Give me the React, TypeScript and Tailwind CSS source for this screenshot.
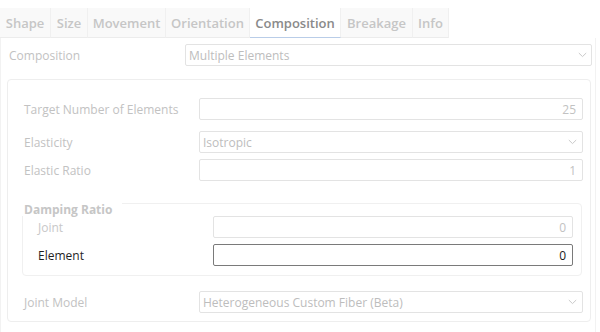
import React from "react";

const tabs = [
  { name: "Shape", w: 51 },
  { name: "Size", w: 37 },
  { name: "Movement", w: 78 },
  { name: "Orientation", w: 84 },
  { name: "Composition", w: 91, active: true },
  { name: "Breakage", w: 72 },
  { name: "Info", w: 36 },
];

function Chevron() {
  return (
    <svg width="9" height="6" viewBox="0 0 9 6" className="shrink-0">
      <path d="M0.8 1 L4.5 4.6 L8.2 1" fill="none" stroke="#c9c9c9" strokeWidth="1" />
    </svg>
  );
}

function Input({ value, dark, w }: { value: string; dark?: boolean; w: string }) {
  return (
    <div
      className={`h-[22px] ${w} rounded-[2px] border flex items-center justify-end px-[6px] pt-[1px] ${
        dark ? "border-[#7a7a7a] text-[#1a1a1a]" : "border-[#e3e3e3] text-[#c2c2c2]"
      }`}
    >
      {value}
    </div>
  );
}

function Select({ value, w, pr }: { value: string; w: string; pr: string }) {
  return (
    <div
      className={`h-[22px] ${w} rounded-[2px] border border-[#e3e3e3] flex items-center justify-between pl-[3px] ${pr} text-[#bdbdbd]`}
    >
      <span className="pt-[1px]">{value}</span>
      <Chevron />
    </div>
  );
}

export default function App() {
  return (
    <div
      className="w-[600px] h-[332px] bg-white overflow-hidden text-[12px] leading-none"
      style={{ fontFamily: '"Open Sans", "Noto Sans", sans-serif' }}
    >
      <div className="pt-[8px]">
        <div className="flex h-[30px]">
          {tabs.map((t) => (
            <div
              key={t.name}
              style={{ width: t.w }}
              className={`flex items-center justify-center font-semibold text-[13px] pt-[1px] border-r border-[#f0f0f0] ${
                t.active
                  ? "bg-white text-[#8a8a8a] border-b border-b-[#b9cde8]"
                  : "bg-[#f9f9f9] text-[#c6c6c6] border-b border-b-[#ececec]"
              }`}
            >
              {t.name}
            </div>
          ))}
        </div>
        <div className="h-[294px] w-[596px] border-l border-r border-[#f2f2f2] pt-[6px]">
          <div className="flex items-center h-[22px]">
            <div className="w-[184px] pl-[8px] pt-[1px] text-[#c2c2c2]">Composition</div>
            <Select value="Multiple Elements" w="w-[407px]" pr="pr-[4px]" />
          </div>
          <div className="mt-[13px] ml-[6px] w-[584px] h-[243px] rounded-[4px] border border-[#eeeeee] pt-[18px] pl-[16px]">
            <div className="flex items-center">
              <div className="w-[175px] pt-[1px] text-[#c2c2c2]">Target Number of Elements</div>
              <Input value="25" w="w-[384px]" />
            </div>
            <div className="flex items-center mt-[11px]">
              <div className="w-[175px] pt-[1px] text-[#c2c2c2]">Elasticity</div>
              <Select value="Isotropic" w="w-[384px]" pr="pr-[5px]" />
            </div>
            <div className="flex items-center mt-[6px]">
              <div className="w-[175px] pt-[1px] text-[#c2c2c2]">Elastic Ratio</div>
              <Input value="1" w="w-[384px]" />
            </div>
            <div className="relative mt-[22px] ml-[-2px] w-[560px] h-[73px] rounded-[4px] border border-[#f0f0f0] pt-[12px] pl-[15px]">
              <div className="absolute left-[-1px] top-[-1px] w-[100px] h-[13px] bg-white pl-[2px] pt-[1px] font-bold text-[#c6c6c6]">
                Damping Ratio
              </div>
              <div className="flex items-center">
                <div className="w-[175px] pt-[1px] text-[#c8c8c8]">Joint</div>
                <Input value="0" w="w-[360px]" />
              </div>
              <div className="flex items-center mt-[6px]">
                <div className="w-[175px] pt-[1px] text-[#1f1f1f]">Element</div>
                <Input value="0" dark w="w-[360px]" />
              </div>
            </div>
            <div className="flex items-center mt-[15px]">
              <div className="w-[175px] pt-[1px] text-[#c2c2c2]">Joint Model</div>
              <Select value="Heterogeneous Custom Fiber (Beta)" w="w-[384px]" pr="pr-[5px]" />
            </div>
          </div>
        </div>
      </div>
    </div>
  );
}
